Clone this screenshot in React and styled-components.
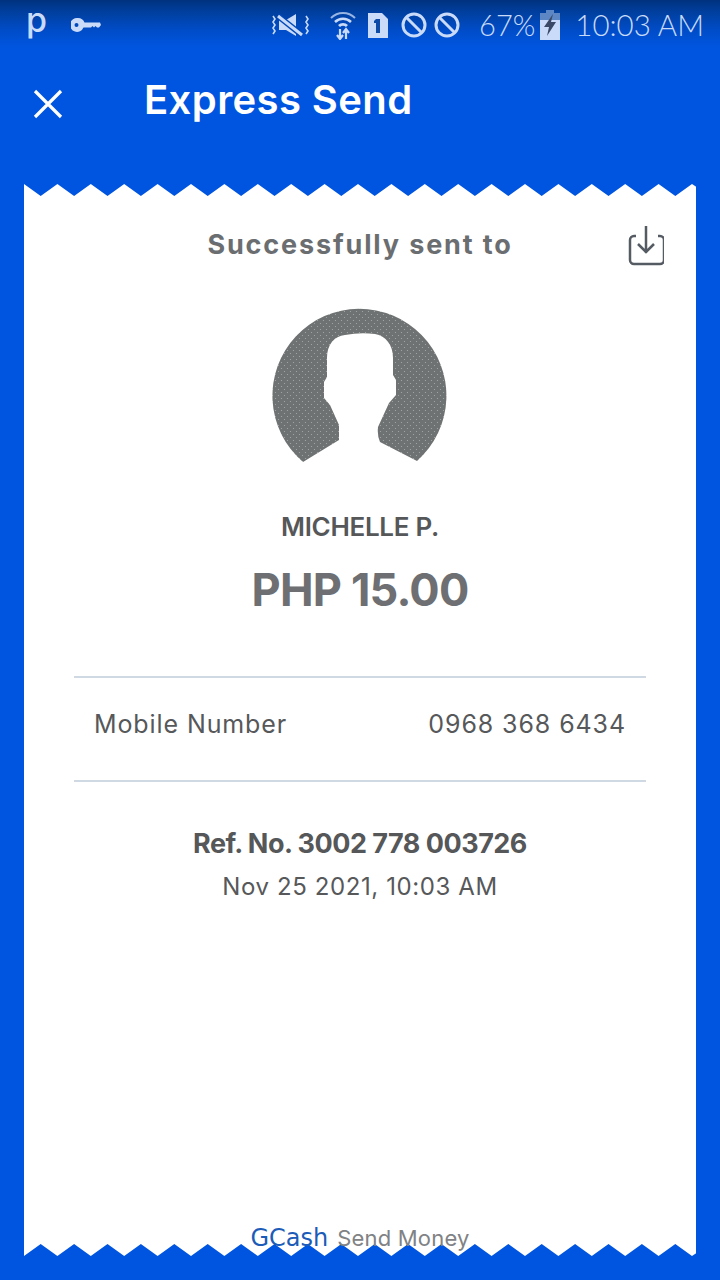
import styled, { createGlobalStyle } from "styled-components";

const GlobalStyle = createGlobalStyle`
  html, body {
    margin: 0;
    padding: 0;
    background: #0055e0;
  }
  * {
    box-sizing: border-box;
  }
`;

const Page = styled.div`
  width: 720px;
  height: 1280px;
  overflow: hidden;
  display: flex;
  flex-direction: column;
  background: #0055e0;
  font-family: "Inter", "Liberation Sans", sans-serif;
`;

const StatusBar = styled.div`
  height: 50px;
  flex: none;
  display: flex;
  align-items: center;
  justify-content: space-between;
  padding: 0 16px 0 26px;
  color: #c9dbf8;
  background: linear-gradient(#00327f 0, #003f9e 12px, #004cc8 30px, #0055e0 48px);
  font-family: "Lato", sans-serif;
  font-weight: 300;
`;

const StatusGroup = styled.div`
  display: flex;
  align-items: center;
  gap: ${(p) => p.$gap}px;
`;

const AppLetter = styled.span`
  font-family: "Inter", sans-serif;
  font-size: 34px;
  font-weight: 500;
  line-height: 34px;
  margin-bottom: 10px;
`;

const IconSlot = styled.span`
  display: flex;
  margin-left: ${(p) => p.$left || 0}px;
`;

const StatusText = styled.span`
  font-size: ${(p) => p.$size}px;
  margin-left: ${(p) => p.$left || 0}px;
  line-height: 30px;
`;

const Header = styled.header`
  height: 134px;
  flex: none;
  display: flex;
  align-items: flex-start;
  padding: 27px 0 0 33px;
  gap: 81px;
`;

const CloseButton = styled.svg`
  width: 30px;
  height: 30px;
  margin-top: 12px;
  flex: none;
`;

const Title = styled.h1`
  margin: 0;
  font-size: 40px;
  line-height: 46px;
  font-weight: 600;
  color: #fff;
  letter-spacing: 0.4px;
`;

const Receipt = styled.main`
  margin: 0 24px;
  height: 1072px;
  flex: none;
  display: flex;
  flex-direction: column;
`;

const Edge = styled.svg`
  display: block;
  width: 672px;
  height: 12px;
  flex: none;
  transform: ${(p) => (p.$flip ? "scaleY(-1)" : "none")};

  path {
    filter: blur(0.6px);
  }
`;

const Body = styled.div`
  flex: 1;
  background: #fff;
  display: flex;
  flex-direction: column;
  align-items: center;
  padding-top: 26px;
`;

const TitleRow = styled.div`
  width: 100%;
  display: grid;
  grid-template-columns: 1fr auto 1fr;
  align-items: center;
  padding: 0 32px;
  height: 38px;
`;

const SentTo = styled.h2`
  grid-column: 2;
  margin: 0;
  font-size: 27px;
  font-weight: 700;
  color: #6b6e70;
  letter-spacing: 1.85px;
`;

const SaveIcon = styled.svg`
  justify-self: end;
  width: 36px;
  height: 42px;
  margin-top: 2px;
`;

const Avatar = styled.svg`
  width: 176px;
  height: 158px;
  margin-top: 47px;
  flex: none;
`;

const Name = styled.div`
  margin-top: 46px;
  font-size: 26px;
  line-height: 32px;
  font-weight: 600;
  color: #555759;
  letter-spacing: -0.3px;
`;

const Amount = styled.div`
  margin-top: 19px;
  font-size: 45px;
  line-height: 56px;
  font-weight: 700;
  color: #6d6f72;
  letter-spacing: -0.8px;
`;

const DetailRow = styled.div`
  width: 572px;
  height: 106px;
  margin-top: 58px;
  padding: 0 20px 10px;
  display: flex;
  align-items: center;
  justify-content: space-between;
  border-top: 2px solid #cfd9e3;
  border-bottom: 2px solid #cfd9e3;
  font-size: 25px;
  letter-spacing: 0.9px;
  color: #56585a;
`;

const RefNumber = styled.div`
  margin-top: 44px;
  font-size: 27px;
  line-height: 36px;
  font-weight: 700;
  color: #555759;
  letter-spacing: -0.5px;
`;

const DateText = styled.div`
  margin-top: 10px;
  font-size: 24px;
  line-height: 30px;
  letter-spacing: 0.6px;
  color: #56585a;
`;

const Footer = styled.div`
  margin-top: auto;
  margin-bottom: -8px;
  position: relative;
  z-index: 1;
  display: flex;
  align-items: center;
  gap: 9px;
  font-size: 22px;
  line-height: 28px;
  letter-spacing: 0.2px;
  color: #808285;
`;

const Brand = styled.span`
  font-family: "DejaVu Sans", sans-serif;
  font-size: 24px;
  letter-spacing: 0;
  color: #1c5cb8;
`;

function ZigZag({ flip }) {
  const period = 33.4;
  let d = "M-4 20 L-4 0 L0 0";
  for (let i = 0; i < 20; i++) {
    d += ` L${i * period + period / 2} 12 L${(i + 1) * period} 0`;
  }
  d += " L680 8 L680 20 Z";
  return (
    <Edge $flip={flip} viewBox="0 0 672 12">
      <path d={d} fill="#fff" />
    </Edge>
  );
}

function KeyIcon() {
  return (
    <svg width="30" height="16" viewBox="0 0 30 16">
      <path
        d="M7 1a7 7 0 0 1 6.500 4.500H29l1 2.500-2 2.500h-2l-1.500-1.500-1.500 1.500-1.500-1.500-1.500 1.500h-7.500A7 7 0 1 1 7 1zM5.500 6a2 2 0 1 0 0 4 2 2 0 0 0 0-4z"
        fill="#c9dbf8"
        fillRule="evenodd"
      />
    </svg>
  );
}

function MuteIcon() {
  return (
    <svg width="38" height="24" viewBox="0 0 38 24" fill="none">
      <path d="M8 7h7l10-6v22l-10-6H8z" fill="#c9dbf8" />
      <path d="M7 3l24 19" stroke="#0047b8" strokeWidth="6" />
      <path d="M7 3l24 19" stroke="#c9dbf8" strokeWidth="3" />
      <path
        d="M2 3l2 3-2 3 2 3-2 3 2 3-2 3M35 3l2 3-2 3 2 3-2 3 2 3-2 3"
        stroke="#c9dbf8"
        strokeWidth="1.600"
      />
    </svg>
  );
}

function WifiIcon() {
  return (
    <svg width="26" height="29" viewBox="0 0 26 29" fill="none" stroke="#c9dbf8">
      <path d="M1 7a17 17 0 0 1 24 0" strokeWidth="2" opacity=".75" />
      <path d="M5 11a11.500 11.500 0 0 1 16 0" strokeWidth="2.500" />
      <path d="M9 15a6 6 0 0 1 8 0" strokeWidth="3" />
      <path d="M10 18v9M7 24l3 4 3-4M16 28v-9M13 22l3-4 3 4" strokeWidth="2.200" />
    </svg>
  );
}

function SimIcon() {
  return (
    <svg width="20" height="25" viewBox="0 0 20 25">
      <path d="M0 0h14l6 6v19H0z" fill="#c9dbf8" />
      <path d="M8 6h4v14H8V10H6V8z" fill="#0d4aa8" />
    </svg>
  );
}

function BlockedIcon() {
  return (
    <svg width="26" height="26" viewBox="0 0 26 26" fill="none" stroke="#c9dbf8" strokeWidth="3">
      <circle cx="13" cy="13" r="11" />
      <path d="M5 5l16 16" />
    </svg>
  );
}

function BatteryIcon() {
  return (
    <svg width="20" height="30" viewBox="0 0 20 30">
      <path d="M6 0h8v3h6v27H0V3h6z" fill="#c9dbf8" />
      <path d="M6 0h8v3h6v7H0V3h6z" fill="#5c86c4" />
      <path d="M13 4L4 17h5l-2 9 9-14h-5z" fill="#3a4a66" />
    </svg>
  );
}

export default function App() {
  return (
    <Page>
      <GlobalStyle />
      <StatusBar>
        <StatusGroup $gap={24}>
          <AppLetter>p</AppLetter>
          <KeyIcon />
        </StatusGroup>
        <StatusGroup $gap={7}>
          <MuteIcon />
          <IconSlot $left={14}>
            <WifiIcon />
          </IconSlot>
          <IconSlot $left={5}>
            <SimIcon />
          </IconSlot>
          <IconSlot $left={6}>
            <BlockedIcon />
          </IconSlot>
          <BlockedIcon />
          <StatusText $size={29} $left={12}>
            67%
          </StatusText>
          <IconSlot $left={-2}>
            <BatteryIcon />
          </IconSlot>
          <StatusText $size={29.5} $left={8}>
            10:03 AM
          </StatusText>
        </StatusGroup>
      </StatusBar>
      <Header>
        <CloseButton viewBox="0 0 30 30" fill="none" stroke="#fff" strokeWidth="3.200">
          <path d="M2 2l26 26M28 2L2 28" />
        </CloseButton>
        <Title>Express Send</Title>
      </Header>
      <Receipt>
        <ZigZag />
        <Body>
          <TitleRow>
            <SentTo>Successfully sent to</SentTo>
            <SaveIcon viewBox="0 0 36 42" fill="none" stroke="#555b63" strokeWidth="2.500">
              <path d="M8 12H6a4 4 0 0 0-4 4v20a4 4 0 0 0 4 4h26a4 4 0 0 0 4-4V16a4 4 0 0 0-4-4h-2" />
              <path d="M18 2v27M10 20l8 8 8-8" />
            </SaveIcon>
          </TitleRow>
          <Avatar viewBox="22 12 176 158">
            <defs>
              <pattern id="avatar-dots" width="6" height="6" patternUnits="userSpaceOnUse">
                <rect width="6" height="6" fill="#6f7272" />
                <circle cx="1.500" cy="1.500" r=".6" fill="#a9abab" />
                <circle cx="4.500" cy="4.500" r=".6" fill="#a9abab" />
              </pattern>
            </defs>
            <path
              d="M53 167A87 87 0 1 1 167 166L130 147Q127 140 128 132L139 108L146 100V85L143 80V63C143 50 136 41 125 39Q110 37 95 40C84 41 77 50 77 63V82L74 87V103L80 110L89 130V145Z"
              fill="url(#avatar-dots)"
            />
          </Avatar>
          <Name>MICHELLE P.</Name>
          <Amount>PHP 15.00</Amount>
          <DetailRow>
            <span>Mobile Number</span>
            <span>0968 368 6434</span>
          </DetailRow>
          <RefNumber>Ref. No. 3002 778 003726</RefNumber>
          <DateText>Nov 25 2021, 10:03 AM</DateText>
          <Footer>
            <Brand>GCash</Brand>
            <span>Send Money</span>
          </Footer>
        </Body>
        <ZigZag flip />
      </Receipt>
    </Page>
  );
}
